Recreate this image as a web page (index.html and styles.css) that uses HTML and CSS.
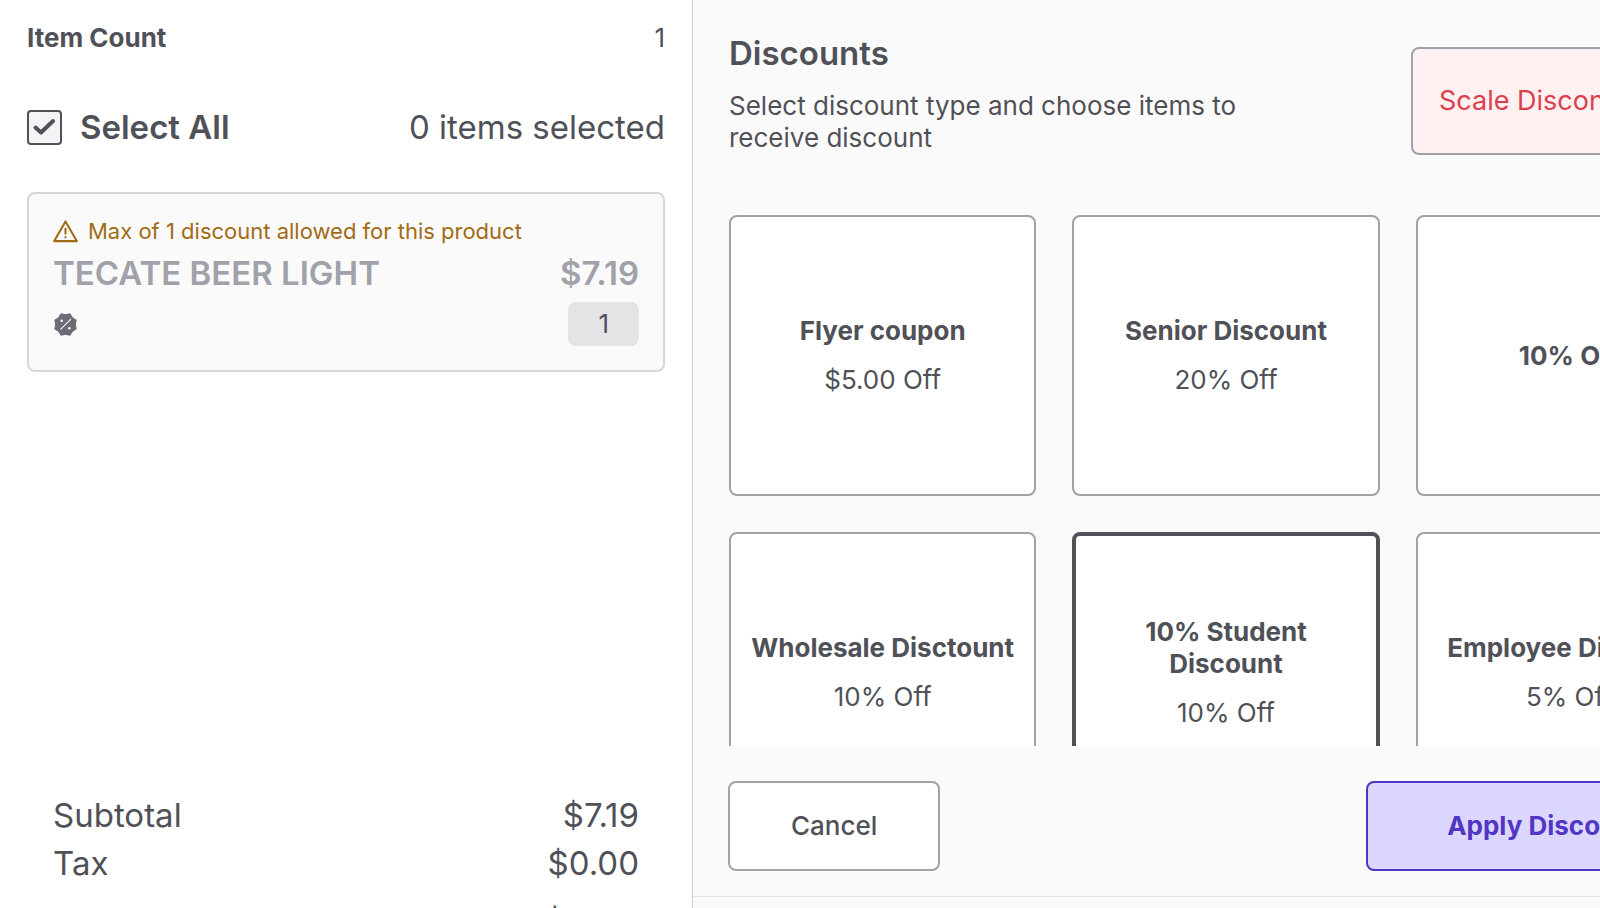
FILE: index.html
```html
<!DOCTYPE html>
<html lang="en">
<head>
    <meta charset="UTF-8">
    <meta name="viewport" content="width=device-width, initial-scale=1.0">
    <title>Discounts</title>
    <link rel="stylesheet" href="styles.css">
</head>
<body>
    <div class="app">
        <aside class="cart">
            <div class="cart-row item-count">
                <strong>Item Count</strong>
                <span>1</span>
            </div>
            <div class="cart-row select-row">
                <label class="select-all" for="select-all">
                    <span class="checkbox">
                        <input type="checkbox" id="select-all" checked>
                        <svg viewBox="0 0 35 35" aria-hidden="true">
                            <path d="M8.500 17.500 L14 22.500 L26 11" />
                        </svg>
                    </span>
                    Select All
                </label>
                <span>0 items selected</span>
            </div>
            <div class="product">
                <div class="warning">
                    <svg viewBox="0 0 24 24" aria-hidden="true">
                        <path d="M12 2.300 L22.800 21.200 H1.200 Z" />
                        <path d="M12 9.500 V14 M12 17.300 V17.600" />
                    </svg>
                    <span>Max of 1 discount allowed for this product</span>
                </div>
                <div class="cart-row product-name">
                    <strong>TECATE BEER LIGHT</strong>
                    <strong>$7.19</strong>
                </div>
                <div class="cart-row">
                    <svg class="badge" viewBox="0 0 24 24" aria-hidden="true">
                        <path class="badge-shape" d="M12 2.600 L16.200 1.800 L18.600 5.400 L22.200 7.800 L21.400 12 L22.200 16.200 L18.600 18.600 L16.200 22.200 L12 21.400 L7.800 22.200 L5.400 18.600 L1.800 16.200 L2.600 12 L1.800 7.800 L5.400 5.400 L7.800 1.800 Z" />
                        <path class="badge-line" d="M7.500 16.500 L17 7" />
                        <circle cx="8.300" cy="8.300" r="1.200" />
                        <circle cx="15.700" cy="15.700" r="1.200" />
                    </svg>
                    <span class="quantity">1</span>
                </div>
            </div>
            <div class="totals">
                <div class="cart-row">
                    <span>Subtotal</span>
                    <span>$7.19</span>
                </div>
                <div class="cart-row">
                    <span>Tax</span>
                    <span>$0.00</span>
                </div>
                <div class="cart-row total">
                    <strong>Total</strong>
                    <strong>$7.19</strong>
                </div>
            </div>
        </aside>
        <main class="panel">
            <header class="panel-header">
                <div class="heading">
                    <h1>Discounts</h1>
                    <p>Select discount type and choose items to receive discount</p>
                </div>
                <button type="button" class="btn scale-btn">Scale Disconnected</button>
            </header>
            <div class="discount-list">
                <button type="button" class="discount">
                    <strong>Flyer coupon</strong>
                    <span>$5.00 Off</span>
                </button>
                <button type="button" class="discount">
                    <strong>Senior Discount</strong>
                    <span>20% Off</span>
                </button>
                <button type="button" class="discount">
                    <strong>10% Off</strong>
                </button>
                <button type="button" class="discount">
                    <strong>Wholesale Disctount</strong>
                    <span>10% Off</span>
                </button>
                <button type="button" class="discount selected" aria-pressed="true">
                    <strong>10% Student Discount</strong>
                    <span>10% Off</span>
                </button>
                <button type="button" class="discount">
                    <strong>Employee Discount</strong>
                    <span>5% Off</span>
                </button>
            </div>
            <div class="actions">
                <button type="button" class="btn cancel-btn">Cancel</button>
                <button type="button" class="btn apply-btn">Apply Discount</button>
            </div>
            <div class="bottom-bar"></div>
        </main>
    </div>
</body>
</html>
```

FILE: styles.css
```css
* {
    box-sizing: border-box;
}
body {
    margin: 0;
    overflow: hidden;
    font-family: Inter, "Liberation Sans", sans-serif;
    font-size: 26px;
    line-height: 32px;
    color: #505158;
    background-color: #fff;
}
strong {
    font-weight: 700;
}
button {
    font: inherit;
    color: inherit;
    cursor: pointer;
}
/* The workspace runs a little past the right and bottom edges of the window */
.app {
    display: grid;
    grid-template-columns: 63fr 97fr;
    width: 110%;
    height: calc(100vh + 48px);
}

/* Cart */
.cart {
    display: flex;
    flex-direction: column;
    padding: 22px 27px 0;
    border-right: 1px solid #cfcfd3;
}
.cart-row {
    display: flex;
    justify-content: space-between;
    align-items: center;
}
.select-row {
    margin-top: 51px;
    font-size: 33px;
    line-height: 44px;
}
.select-all {
    display: flex;
    align-items: center;
    gap: 18px;
    font-weight: 600;
    cursor: pointer;
}
.checkbox {
    display: grid;
    width: 35px;
    height: 35px;
}
.checkbox input,
.checkbox svg {
    grid-area: 1 / 1;
    width: 100%;
    height: 100%;
    margin: 0;
}
.checkbox input {
    appearance: none;
    border: 2px solid #505158;
    border-radius: 4px;
    background-color: #f4f4f6;
}
.checkbox svg {
    fill: none;
    stroke: #505158;
    stroke-width: 4;
    stroke-linecap: round;
    stroke-linejoin: round;
    pointer-events: none;
    visibility: hidden;
}
.checkbox input:checked + svg {
    visibility: visible;
}
.product {
    margin-top: 43px;
    padding: 23px 24px 24px;
    border: 2px solid #d6d7d9;
    border-radius: 8px;
    background-color: #fafafa;
}
.warning {
    display: flex;
    align-items: center;
    gap: 10px;
    font-size: 22px;
    line-height: 28px;
    color: #a16b14;
}
.warning svg {
    width: 25px;
    height: 25px;
    fill: none;
    stroke: currentColor;
    stroke-width: 2;
    stroke-linecap: round;
    stroke-linejoin: round;
}
.product-name {
    padding: 6px 0 7px;
    font-size: 33px;
    line-height: 44px;
    color: #a1a1aa;
}
.product-name strong {
    font-weight: 600;
}
.badge {
    width: 25px;
    height: 25px;
}
.badge-shape {
    fill: #6b6c76;
    stroke: #6b6c76;
    stroke-width: 1;
    stroke-linejoin: round;
}
.badge-line {
    stroke: #fafafa;
    stroke-width: 1;
    stroke-linecap: round;
}
.badge circle {
    fill: #fafafa;
}
.quantity {
    padding: 6px 30px;
    border-radius: 8px;
    background-color: #e4e4e7;
}
.totals {
    margin-top: auto;
    padding: 0 26px;
    font-size: 33px;
    line-height: 48px;
}
.total {
    padding: 13px 0 8px;
    font-size: 40px;
}

/* Discounts */
.panel {
    display: flex;
    flex-direction: column;
    min-height: 0;
    background-color: #fafafa;
}
.panel-header {
    display: flex;
    justify-content: space-between;
    align-items: center;
    padding: 32px 36px 45px;
}
.heading {
    max-width: 560px;
    padding-bottom: 16px;
}
h1 {
    margin: 0;
    font-size: 33px;
    font-weight: 600;
    line-height: 42px;
}
.heading p {
    margin: 16px 0 0;
}
.btn {
    border: 2px solid #a1a1aa;
    border-radius: 8px;
}
.scale-btn {
    min-width: 313px;
    padding: 36px 26px;
    font-size: 27px;
    text-align: left;
    color: #dc3f4e;
    background-color: #fff1f1;
}
.discount-list {
    display: grid;
    grid-template-columns: repeat(3, 1fr);
    grid-auto-rows: 281px;
    gap: 36px;
    flex: 1;
    min-height: 0;
    padding: 0 37px 0 36px;
    overflow: hidden;
}
.discount {
    display: flex;
    flex-direction: column;
    justify-content: center;
    align-items: center;
    gap: 17px;
    padding: 16px;
    border: 2px solid #a1a1aa;
    border-radius: 8px;
    background-color: #fff;
}
.discount.selected {
    padding: 14px;
    border: 4px solid #505158;
}
.actions {
    display: flex;
    justify-content: space-between;
    padding: 35px 37px 25px 35px;
}
.cancel-btn {
    padding: 27px 61px;
    font-weight: 500;
    background-color: #fff;
}
.apply-btn {
    padding: 27px 79px;
    font-weight: 700;
    color: #5136c4;
    border-color: #5136c4;
    background-color: #dcd7fe;
}
.bottom-bar {
    height: 60px;
    border-top: 1px solid #e2e2e4;
}
```
